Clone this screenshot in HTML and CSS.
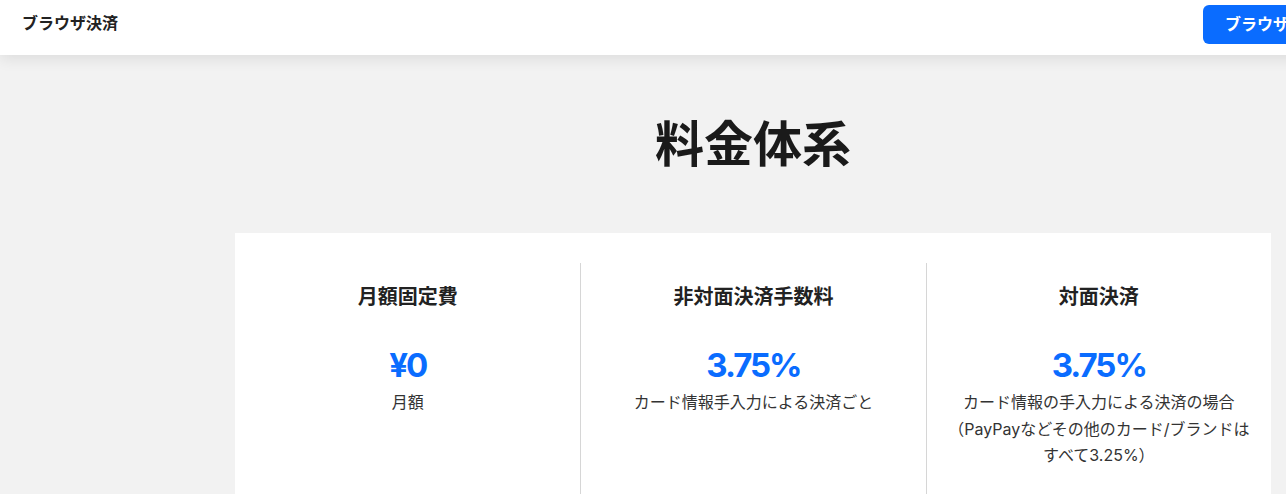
FILE: index.html
```html
<!DOCTYPE html>
<html lang="ja">
<head>
<meta charset="utf-8">
<title>料金体系</title>
<link rel="stylesheet" href="styles.css">
</head>
<body>
<div class="page">
  <header class="site-header">
    <div class="brand">ブラウザ決済</div>
    <a class="cta" href="#">ブラウザ決済を申し込む</a>
  </header>
  <main class="pricing">
    <h1 class="pricing-title">料金体系</h1>
    <div class="pricing-card">
      <section class="plan">
        <h2 class="plan-name">月額固定費</h2>
        <div class="plan-price">¥0</div>
        <p class="plan-note">月額</p>
      </section>
      <section class="plan">
        <h2 class="plan-name">非対面決済手数料</h2>
        <div class="plan-price">3.75%</div>
        <p class="plan-note">カード情報手入力による決済ごと</p>
      </section>
      <section class="plan">
        <h2 class="plan-name">対面決済</h2>
        <div class="plan-price">3.75%</div>
        <p class="plan-note">カード情報の手入力による決済の場合<br>（PayPayなどその他のカード/ブランドは<br>すべて3.25%）</p>
      </section>
    </div>
  </main>
</div>
</body>
</html>
```

FILE: styles.css
```css
html, body {
  margin: 0;
  padding: 0;
}
body {
  background: #f2f2f2;
  overflow-x: hidden;
  font-family: Inter, "Noto Sans CJK JP", sans-serif;
  color: #222;
}
.page {
  width: 1506px;
}
.site-header {
  height: 55px;
  background: #fff;
  box-shadow: 0 4px 14px rgba(0, 0, 0, 0.09);
  display: flex;
  align-items: flex-start;
  justify-content: space-between;
  padding: 0 22px;
  position: relative;
  z-index: 1;
}
.brand {
  font-size: 16px;
  font-weight: 700;
  line-height: 47px;
  color: #222;
}
.cta {
  margin-top: 5px;
  height: 39px;
  line-height: 38px;
  padding: 0 83px 0 22px;
  background: #0a6cff;
  color: #fff;
  border-radius: 6px;
  font-size: 16px;
  font-weight: 700;
  text-decoration: none;
}
.pricing {
  padding-top: 56px;
  display: flex;
  flex-direction: column;
  align-items: center;
}
.pricing-title {
  margin: 0 0 55px;
  font-size: 49px;
  line-height: 67px;
  font-weight: 700;
  color: #1a1a1a;
}
.pricing-card {
  width: 1036px;
  background: #fff;
  padding: 30px 0;
  display: grid;
  grid-template-columns: repeat(3, 1fr);
}
.plan {
  padding: 19px 16px 40px;
  min-height: 240px;
  text-align: center;
}
.plan + .plan {
  border-left: 1px solid #d6d6d6;
}
.plan-name {
  margin: 0;
  font-size: 20px;
  line-height: 30px;
  font-weight: 700;
  color: #222;
}
.plan-price {
  margin-top: 33px;
  font-size: 33px;
  line-height: 41px;
  font-weight: 700;
  color: #0a6cff;
  letter-spacing: -2px;
}
.plan-note {
  margin: 3px 0 0;
  font-size: 16px;
  line-height: 26.5px;
  color: #333;
}
```
